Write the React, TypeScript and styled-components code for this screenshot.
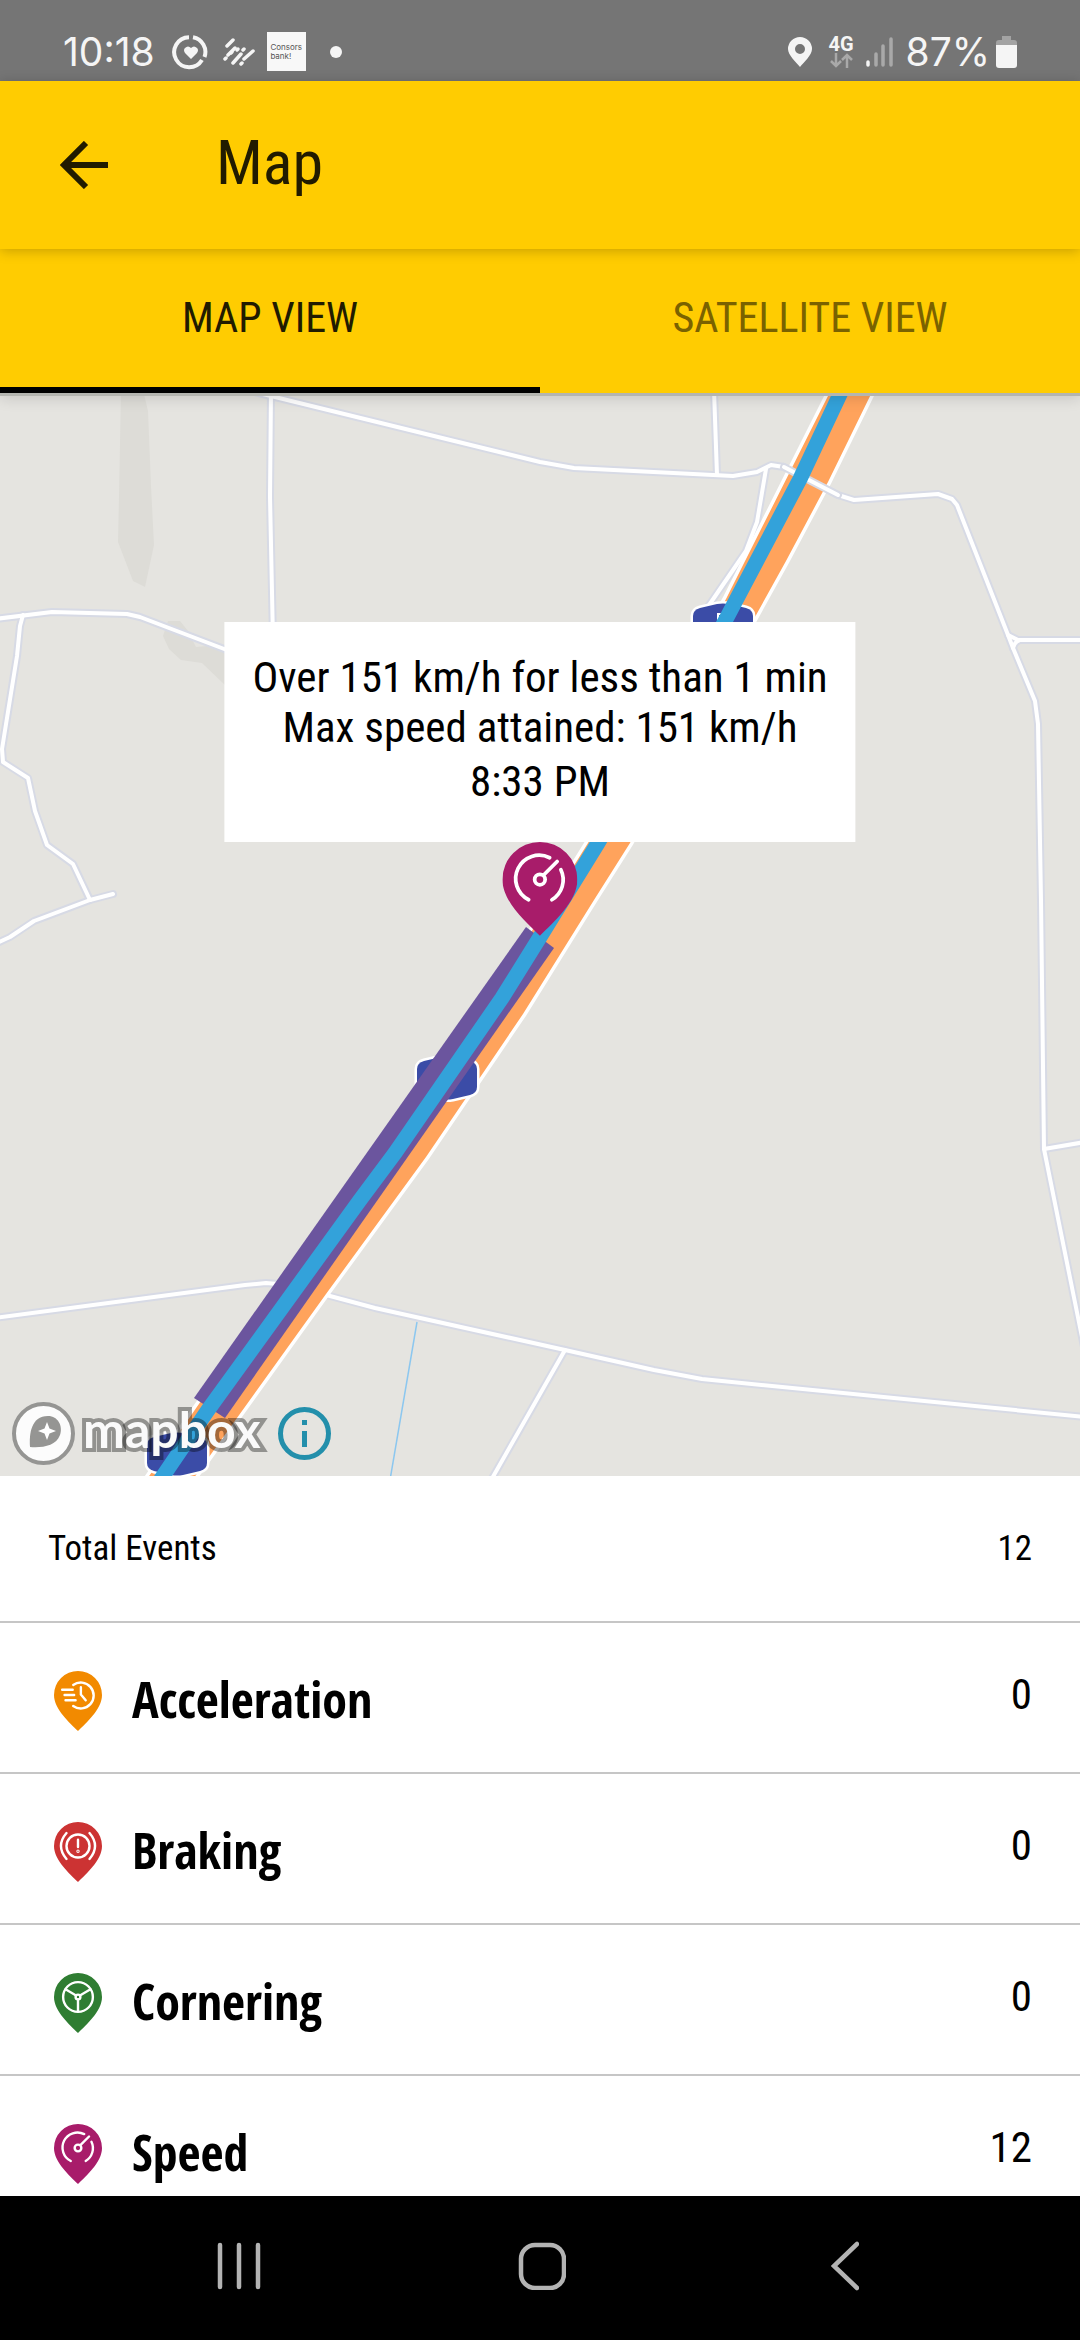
import React, { ReactNode, useState } from "react";
import styled, { createGlobalStyle } from "styled-components";

const yellow = "#ffcc01";
const ink = "#211b00";
const textFont = `"Roboto Condensed", "Open Sans", "Noto Sans", sans-serif`;
const strongFont = `"Open Sans Condensed", "Open Sans", "Noto Sans", sans-serif`;
const systemFont = `Inter, Roboto, sans-serif`;

const GlobalStyle = createGlobalStyle`
  * { box-sizing: border-box; }
  body { margin: 0; background: #fff; }
  button { border: 0; padding: 0; background: none; font: inherit; color: inherit; cursor: pointer; }
  svg { display: block; flex: none; }
`;

const Screen = styled.div`
  display: flex;
  flex-direction: column;
  height: 100vh;
  overflow: hidden;
  background: #fff;
  color: #000;
  font-family: ${textFont};
`;

/* Status bar */

const StatusBar = styled.div`
  display: flex;
  flex: none;
  align-items: center;
  justify-content: space-between;
  height: 81px;
  padding: 22px 63px 0;
  background: #757575;
  color: #f5f5f5;
  font: 400 39px/48px ${systemFont};
`;

const StatusGroup = styled.div<{ $gap: number }>`
  display: flex;
  align-items: center;
  gap: ${(p) => p.$gap}px;
`;

const BankBadge = styled.div`
  display: flex;
  align-items: center;
  justify-content: center;
  width: 39px;
  height: 39px;
  background: #f8f8f8;
  color: #555;
  font-size: 8px;
  line-height: 9px;
`;

const Network = styled.div`
  display: flex;
  flex-direction: column;
  align-items: center;
  width: 37px;
  font: 700 20px/18px Roboto, sans-serif;
`;

/* App bar and tabs */

const AppBar = styled.header`
  position: relative;
  z-index: 3;
  display: flex;
  flex: none;
  align-items: center;
  gap: 108px;
  height: 168px;
  padding: 0 60px;
  background: ${yellow};
  color: ${ink};
  box-shadow: 0 2px 12px rgba(0, 0, 0, 0.22);
`;

const Title = styled.h1`
  margin: 0;
  padding-bottom: 4px;
  font-weight: 400;
  font-size: 62px;
  line-height: 72px;
`;

const Tabs = styled.div`
  position: relative;
  z-index: 2;
  display: flex;
  flex: none;
  height: 147px;
  background: ${yellow};
  border-bottom: 3px solid #b4b5b0;
  box-shadow: 0 2px 14px rgba(0, 0, 0, 0.14);
`;

const Tab = styled.button<{ $active: boolean }>`
  && {
    flex: 1;
    border-bottom: 6px solid ${(p) => (p.$active ? "#000" : yellow)};
    color: ${(p) => (p.$active ? ink : "#7a6200")};
    font-size: 42px;
    line-height: 50px;
  }
`;

/* Map */

const MapArea = styled.main`
  position: relative;
  flex: none;
  aspect-ratio: 1;
  overflow: hidden;
  background: #e5e4e0;
`;

const MapDrawing = styled.svg`
  width: 100%;
  height: 100%;
`;

const Callout = styled.div`
  position: absolute;
  left: 50%;
  bottom: 50%;
  display: flex;
  flex-direction: column;
  align-items: center;
  transform: translateX(-50%);
`;

const CalloutBox = styled.div`
  display: flex;
  flex-direction: column;
  gap: 4px;
  padding: 30px 28px 36px;
  background: #fff;
  font-size: 43px;
  line-height: 50px;
  text-align: center;
  white-space: nowrap;

  p { margin: 0; }
`;

const Attribution = styled.div`
  position: absolute;
  left: 12px;
  bottom: 11px;
  display: flex;
  align-items: center;
  gap: 8px;
`;

const Wordmark = styled.span`
  margin-right: 9px;
  padding-bottom: 8px;
  color: #fafafa;
  font: 700 50px/56px Lato, sans-serif;
  -webkit-text-stroke: 8px rgba(0, 0, 0, 0.36);
  paint-order: stroke fill;
  stroke-linejoin: round;
`;

/* Event list */

const Events = styled.ul`
  flex: 1 1 0;
  min-height: 0;
  margin: 0;
  padding: 0;
  overflow: hidden;
  list-style: none;
`;

const TotalRow = styled.li`
  display: flex;
  align-items: center;
  justify-content: space-between;
  height: 147px;
  padding: 0 48px;
  border-bottom: 2px solid #c6c6c6;
  font-size: 35px;
  line-height: 42px;
`;

const EventRow = styled.li`
  display: flex;
  align-items: center;
  height: 151px;
  padding: 6px 48px 0 54px;
  border-bottom: 2px solid #c6c6c6;
`;

const EventName = styled.span`
  flex: 1;
  padding: 0 0 4px 30px;
  font: 700 50px/60px ${strongFont};
`;

const EventCount = styled.span`
  padding-bottom: 14px;
  font-size: 43px;
  line-height: 50px;
`;

/* System navigation */

const NavBar = styled.nav`
  display: flex;
  flex: none;
  height: 144px;
  padding: 0 84px 4px 88px;
  background: #000;
`;

const NavButton = styled.button`
  display: flex;
  flex: 1;
  align-items: center;
  justify-content: center;
`;

type EventKind = "acceleration" | "braking" | "cornering" | "speed";

const pinColors: Record<EventKind, string> = {
  acceleration: "#f28a00",
  braking: "#cc3333",
  cornering: "#2f7d32",
  speed: "#a81c6a",
};

const pinGlyphs: Record<EventKind, ReactNode> = {
  acceleration: (
    <>
      <path d="M40 29A27 27 0 1 1 40 73" />
      <path d="M17 39H39M22 50H42M24 61H45M56 34V49L66 61" />
    </>
  ),
  braking: (
    <>
      <circle cx="50" cy="50" r="24" />
      <path d="M26 23Q3 50 26 77M74 23Q97 50 74 77M50 37V52" />
      <circle cx="50" cy="61" r="1" />
    </>
  ),
  cornering: (
    <>
      <circle cx="50" cy="50" r="31" />
      <circle cx="50" cy="50" r="5" />
      <path d="M46 47L24 34M54 47L76 34M50 55V80" />
    </>
  ),
  speed: (
    <>
      <circle cx="50" cy="50" r="7" />
      <path d="M35 77A31 31 0 0 1 63 21M78 37A31 31 0 0 1 66 77M55 44L73 26" />
    </>
  ),
};

function Pin({ kind, width }: { kind: EventKind; width: number }) {
  return (
    <svg width={width} height={width * 1.25} viewBox="0 0 100 125" aria-hidden="true">
      <path d="M50 125C33 108 0 80 0 50A50 50 0 0 1 100 50C100 80 67 108 50 125Z" fill={pinColors[kind]} />
      <g fill="none" stroke="#fff" strokeWidth="5" strokeLinecap="round" strokeLinejoin="round">
        {pinGlyphs[kind]}
      </g>
    </svg>
  );
}

const roads = [
  "M271 390L270 497L273 640",
  "M250 391L275 397L540 462L574 468L733 476L757 472L771 465L784 467L807 479L838 495L854 500L938 494L952 499L957 505L1008 635L1013 648L1035 701L1038 724L1041 900L1044 1149L1085 1352",
  "M1008 635L1018 640L1085 640M1013 648Q1015 641 1020 640",
  "M1044 1149L1085 1142",
  "M714 390L717 475",
  "M766 469L757 522L746 551L705 611",
  "M-5 619L52 612L127 614L140 617L240 655",
  "M23 615L20 626L17 656L2 749L3 762L28 778L35 811L47 845L73 864L90 900",
  "M-5 944L10 937L34 921L90 900L113 894",
  "M-5 1318L245 1285L266 1283L290 1285L330 1296L375 1308L565 1350L654 1370L702 1379L1085 1417",
  "M565 1350L490 1482",
];

const motorway =
  "M831 390L726 599L588 843L560 888L480 1010L201 1401L145 1482L191 1482L326 1294L426 1157L523 1014L594 900L630 843L755 617L786 561L828 482L873 390Z";
const crossing = "M784 467L807 479L838 495";

function Roads({ paths }: { paths: string[] }) {
  return (
    <g fill="none" strokeLinejoin="round" strokeLinecap="round">
      {paths.map((d) => <path key={d} d={d} stroke="#d7dae5" strokeWidth="8" />)}
      {paths.map((d) => <path key={d} d={d} stroke="#fff" strokeWidth="4" />)}
    </g>
  );
}

function Shield({ x, y }: { x: number; y: number }) {
  return (
    <path
      transform={`translate(${x} ${y})`}
      d="M-23 -17L-6 -21Q0 -22 6 -21L23 -17Q30 -15 30 -9V9Q30 15 23 17L6 21Q0 22 -6 21L-23 17Q-30 15 -30 9V-9Q-30 -15 -23 -17Z"
      fill="#3b4ca7"
      stroke="#fff"
      strokeWidth="5"
      paintOrder="stroke"
    />
  );
}

function TripMap() {
  return (
    <MapDrawing viewBox="0 396 1080 1080" preserveAspectRatio="xMidYMid slice" role="img" aria-label="Trip route">
      <g fill="#dddcd7">
        <path d="M121 390H143L148 411L151 486L154 545L145 587L133 581L118 542L119 497Z" />
        <path d="M168 621H180L188 631L196 647L207 646L240 658V700L225 685L202 663L181 660L169 649L163 636Z" />
      </g>
      <Roads paths={roads} />
      <path d="M417 1322L390 1480" stroke="#8cc7ef" strokeWidth="1.5" />
      <path d={motorway} fill="#ffa35c" stroke="#fff" strokeWidth="7" paintOrder="stroke" />
      <Roads paths={[crossing]} />
      <Shield x={723} y={625} />
      <path d="M718 622V614H723M718 618H722" fill="none" stroke="#fff" strokeWidth="2" />
      <Shield x={447} y={1078} />
      <Shield x={177} y={1454} />
      <path d="M526 927L554 948L225 1418L194 1398Z" fill="#6b559e" />
      <path
        d="M842 390L800 479L724 623L598 843L540 937L502 998L395 1153L360 1200L208 1410L159 1482"
        fill="none"
        stroke="#33a2da"
        strokeWidth="15"
        strokeLinejoin="round"
      />
    </MapDrawing>
  );
}

const events: { kind: EventKind; name: string; count: number }[] = [
  { kind: "acceleration", name: "Acceleration", count: 0 },
  { kind: "braking", name: "Braking", count: 0 },
  { kind: "cornering", name: "Cornering", count: 0 },
  { kind: "speed", name: "Speed", count: 12 },
];

const views = ["MAP VIEW", "SATELLITE VIEW"];

export default function App() {
  const [view, setView] = useState(views[0]);
  const total = events.reduce((sum, e) => sum + e.count, 0);

  return (
    <Screen>
      <GlobalStyle />
      <StatusBar>
        <StatusGroup $gap={12}>
          <span>10:18</span>
          <svg width="42" height="36" viewBox="-2 0 42 36" aria-hidden="true">
            <g fill="none" stroke="#f5f5f5" strokeWidth="4">
              <path d="M20 3.2A15 15 0 1 0 33 26" />
              <path d="M24 3.2A15 15 0 0 1 35.500 23" />
            </g>
            <path d="M22 25L16 19Q14 16 16 14Q19 11 22 14Q25 11 28 14Q30 16 28 19Z" fill="#f5f5f5" />
          </svg>
          <svg width="34" height="28" viewBox="-2 0 34 28" aria-hidden="true">
            <g stroke="#f5f5f5" strokeWidth="3.500" strokeLinecap="round">
              <path d="M4 8L10 2M5 17L12 10M10 25L18 16M21 21L30 13M2 21L3 20M20 12L21 11M18 26L19 25" />
              <path d="M14 12L15 11M8 15L9 14" />
            </g>
          </svg>
          <BankBadge>
            <span>Consors<br />bank!</span>
          </BankBadge>
          <svg width="36" height="12" viewBox="0 0 36 12" aria-hidden="true">
            <circle cx="18" cy="6" r="6" fill="#f5f5f5" />
          </svg>
        </StatusGroup>
        <StatusGroup $gap={6}>
          <svg width="30" height="30" viewBox="0 0 30 30" aria-hidden="true">
            <path
              d="M13 30C9 25 1 18 1 12A12 12 0 0 1 25 12C25 18 17 25 13 30ZM13 7A5 5 0 1 0 13 17A5 5 0 1 0 13 7Z"
              fill="#f5f5f5"
              fillRule="evenodd"
            />
          </svg>
          <Network>
            4G
            <svg width="25" height="15" viewBox="0 0 25 15" aria-hidden="true">
              <path d="M7 0V13M2 8L7 13L12 8M18 15V2M13 7L18 2L23 7" fill="none" stroke="#a9a9a9" strokeWidth="2.500" />
            </svg>
          </Network>
          <svg width="34" height="30" viewBox="0 0 34 30" aria-hidden="true">
            <g strokeWidth="3.500" strokeLinecap="round">
              <path d="M2 25V28" stroke="#f5f5f5" />
              <path d="M10 17V28M17 9V28M25 2V28" stroke="#a9a9a9" />
            </g>
          </svg>
          <span>87%</span>
          <svg width="21" height="32" viewBox="0 0 21 32" aria-hidden="true">
            <path d="M6 0H15V4H18Q21 4 21 7V9H0V7Q0 4 3 4H6Z" fill="#a3a3a3" />
            <path d="M0 9H21V29Q21 32 18 32H3Q0 32 0 29Z" fill="#f5f5f5" />
          </svg>
        </StatusGroup>
      </StatusBar>

      <AppBar>
        <button type="button" aria-label="Back">
          <svg width="48" height="48" viewBox="0 0 48 48" fill="none" stroke={ink} strokeWidth="6">
            <path d="M48 24H5M26 2L4 24L26 46" />
          </svg>
        </button>
        <Title>Map</Title>
      </AppBar>

      <Tabs role="tablist">
        {views.map((name) => (
          <Tab key={name} type="button" role="tab" aria-selected={view === name} $active={view === name} onClick={() => setView(name)}>
            {name}
          </Tab>
        ))}
      </Tabs>

      <MapArea>
        <TripMap />
        <Callout>
          <CalloutBox>
            <p>
              Over 151 km/h for less than 1 min
              <br />
              Max speed attained: 151 km/h
            </p>
            <p>8:33 PM</p>
          </CalloutBox>
          <Pin kind="speed" width={75} />
        </Callout>
        <Attribution>
          <svg width="63" height="63" viewBox="0 0 63 63" aria-hidden="true">
            <circle cx="31.500" cy="31.500" r="29.500" fill="#fcfcfc" stroke="#959593" strokeWidth="4" />
            <path d="M18 45C17 32 19 14 36 14C46 14 51 24 48 33C44 44 30 46 18 45Z" fill="#959593" />
            <path d="M35 20L37.500 26.500L44 29L37.500 31.500L35 38L32.500 31.500L26 29L32.500 26.500Z" fill="#fff" />
          </svg>
          <Wordmark>mapbox</Wordmark>
          <button type="button" aria-label="Map information">
            <svg width="53" height="53" viewBox="0 0 53 53">
              <circle cx="26.500" cy="26.500" r="24" fill="none" stroke="#238fab" strokeWidth="5" />
              <path d="M24 13H29V18H24ZM24 24H29V40H24Z" fill="#238fab" />
            </svg>
          </button>
        </Attribution>
      </MapArea>

      <Events>
        <TotalRow>
          <span>Total Events</span>
          <span>{total}</span>
        </TotalRow>
        {events.map((e) => (
          <EventRow key={e.kind}>
            <Pin kind={e.kind} width={48} />
            <EventName>{e.name}</EventName>
            <EventCount>{e.count}</EventCount>
          </EventRow>
        ))}
      </Events>

      <NavBar>
        <NavButton type="button" aria-label="Recent apps">
          <svg width="46" height="48" viewBox="0 0 46 48" stroke="#b3b3b3" strokeWidth="4.500" strokeLinecap="round">
            <path d="M4 3V45M23 3V45M42 3V45" />
          </svg>
        </NavButton>
        <NavButton type="button" aria-label="Home">
          <svg width="48" height="48" viewBox="0 0 48 48" fill="none" stroke="#b3b3b3" strokeWidth="4.500">
            <rect x="3" y="3" width="43" height="43" rx="14" />
          </svg>
        </NavButton>
        <NavButton type="button" aria-label="Back">
          <svg width="28" height="50" viewBox="0 0 28 50" fill="none" stroke="#b3b3b3" strokeWidth="4.500" strokeLinecap="round">
            <path d="M26 3L3 25L26 47" />
          </svg>
        </NavButton>
      </NavBar>
    </Screen>
  );
}
